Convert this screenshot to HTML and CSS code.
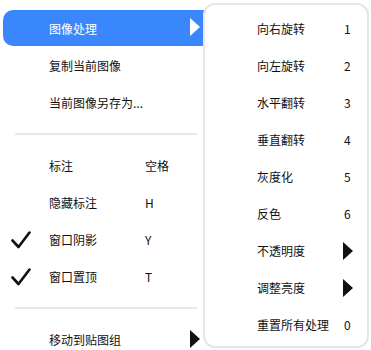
FILE: index.html
```html
<!DOCTYPE html>
<html>
<head>
<meta charset="utf-8">
<link rel="stylesheet" href="styles.css">
</head>
<body>
<div class="menu">
  <div class="row active"><span class="check"></span><span class="label">图像处理</span><span class="key"></span><span class="arrow white"></span></div>
  <div class="row"><span class="check"></span><span class="label">复制当前图像</span><span class="key"></span></div>
  <div class="row"><span class="check"></span><span class="label wide">当前图像另存为...</span></div>
  <div class="sep"></div>
  <div class="row"><span class="check"></span><span class="label">标注</span><span class="key">空格</span></div>
  <div class="row"><span class="check"></span><span class="label">隐藏标注</span><span class="key">H</span></div>
  <div class="row"><span class="check"><svg width="20" height="18" viewBox="0 0 20 18"><path d="M1.5 9.5 L7.5 16 L18.5 1.5" fill="none" stroke="#111" stroke-width="2.6" stroke-linecap="round" stroke-linejoin="round"/></svg></span><span class="label">窗口阴影</span><span class="key">Y</span></div>
  <div class="row"><span class="check"><svg width="20" height="18" viewBox="0 0 20 18"><path d="M1.5 9.5 L7.5 16 L18.5 1.5" fill="none" stroke="#111" stroke-width="2.6" stroke-linecap="round" stroke-linejoin="round"/></svg></span><span class="label">窗口置顶</span><span class="key">T</span></div>
  <div class="sep"></div>
  <div class="row"><span class="check"></span><span class="label">移动到贴图组</span><span class="key"></span><span class="arrow"></span></div>
</div>

<div class="submenu">
  <div class="srow"><span class="slabel">向右旋转</span><span class="skey">1</span></div>
  <div class="srow"><span class="slabel">向左旋转</span><span class="skey">2</span></div>
  <div class="srow"><span class="slabel">水平翻转</span><span class="skey">3</span></div>
  <div class="srow"><span class="slabel">垂直翻转</span><span class="skey">4</span></div>
  <div class="srow"><span class="slabel">灰度化</span><span class="skey">5</span></div>
  <div class="srow"><span class="slabel">反色</span><span class="skey">6</span></div>
  <div class="srow"><span class="slabel">不透明度</span><span class="sarrow"></span></div>
  <div class="srow"><span class="slabel">调整亮度</span><span class="sarrow"></span></div>
  <div class="srow"><span class="slabel">重置所有处理</span><span class="skey">0</span></div>
</div>
</body>
</html>
```

FILE: styles.css
```css
html, body {
  margin: 0;
  padding: 0;
  background: #ffffff;
}

body {
  position: relative;
  width: 371px;
  height: 350px;
  overflow: hidden;
  font-family: "Noto Sans CJK SC", "Noto Sans", sans-serif;
  font-size: 12px;
  color: #111111;
}

.menu {
  padding-top: 10px;
  padding-left: 3px;
  width: 212px;
  display: flex;
  flex-direction: column;
}

.row {
  height: 37px;
  display: flex;
  align-items: center;
  border-radius: 10px;
}

.row.active {
  height: 36px;
  margin-bottom: 1px;
  background: #3a87fd;
  color: #ffffff;
}

.check {
  width: 46px;
  flex: none;
  display: flex;
  align-items: center;
  padding-left: 8px;
  box-sizing: border-box;
}

.check svg {
  display: block;
}

.label {
  width: 96px;
  flex: none;
  white-space: nowrap;
}

.label.wide {
  width: auto;
}

.key {
  width: 45px;
  flex: none;
}

.arrow {
  width: 0;
  height: 0;
  border-left: 10px solid #111111;
  border-top: 9.5px solid transparent;
  border-bottom: 9.5px solid transparent;
  margin-top: -2px;
}

.arrow.white {
  border-left-color: #ffffff;
}

.sep {
  height: 26px;
  display: flex;
  align-items: center;
  padding-left: 12px;
}

.sep::before {
  content: "";
  display: block;
  width: 182px;
  height: 2px;
  background: #e8e8e8;
}

.submenu {
  position: absolute;
  left: 203px;
  top: 3px;
  width: 166px;
  height: 345px;
  box-sizing: border-box;
  border: 2px solid #e6e6e6;
  border-radius: 12px;
  background: #ffffff;
  padding-top: 5px;
  padding-left: 52px;
  display: flex;
  flex-direction: column;
}

.srow {
  height: 37px;
  display: flex;
  align-items: center;
}

.slabel {
  width: 87px;
  flex: none;
  white-space: nowrap;
}

.skey {
  flex: none;
}

.sarrow {
  width: 0;
  height: 0;
  margin-left: -1px;
  border-left: 10px solid #111111;
  border-top: 9px solid transparent;
  border-bottom: 9px solid transparent;
}
```
